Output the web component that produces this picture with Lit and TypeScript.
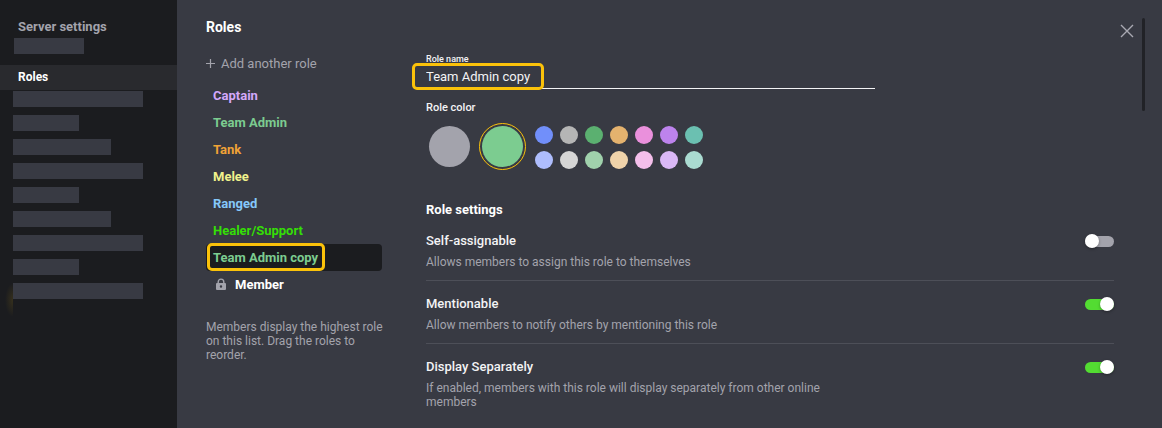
import { LitElement, html, css } from "lit";
import { customElement, property, state } from "lit/decorators.js";

@customElement("toggle-row")
class ToggleRow extends LitElement {
  @property() name = "";
  @property() description = "";
  @property({ type: Boolean }) on = false;

  static styles = css`
    :host { display: block; }
    .row {
      display: grid;
      grid-template-columns: 1fr auto;
      gap: 6px 32px;
      padding: 15px 0 11px;
    }
    :host(:not(:last-of-type)) .row { border-bottom: 1px solid #4d4f58; }
    .name { font-size: 13px; font-weight: 500; line-height: 16px; color: #f3f3f5; }
    .description {
      grid-column: 1;
      max-width: 420px;
      margin: 0;
      font-size: 12px;
      line-height: 14px;
      color: #a3a3ac;
    }
    .switch {
      appearance: none;
      align-self: center;
      display: flex;
      align-items: center;
      width: 29px;
      height: 11px;
      margin: 0;
      border-radius: 6px;
      background: #a3a3ac;
      cursor: pointer;
    }
    .switch::before {
      content: "";
      width: 14px;
      height: 14px;
      flex: none;
      border-radius: 50%;
      background: #fff;
      box-shadow: 0 1px 3px rgba(0, 0, 0, 0.35);
    }
    .switch:checked { justify-content: flex-end; background: #53dc32; }
  `;

  render() {
    return html`
      <div class="row">
        <label class="name" for="switch">${this.name}</label>
        <input class="switch" id="switch" type="checkbox" role="switch"
          aria-describedby="description" .checked=${this.on} />
        <p class="description" id="description">${this.description}</p>
      </div>
    `;
  }
}

const ROLES = [
  { name: "Captain", color: "#d4a8fa" },
  { name: "Team Admin", color: "#7ccc90" },
  { name: "Tank", color: "#f0a236" },
  { name: "Melee", color: "#f0f28c" },
  { name: "Ranged", color: "#85c8fa" },
  { name: "Healer/Support", color: "#35de06" },
  { name: "Team Admin copy", color: "#7ccc90" },
];

const COLORS = [
  "#718ffa", "#b5b5b5", "#5bb070", "#e4b26e", "#ea90dc", "#bd83ed", "#6bc0b1",
  "#aebdfd", "#d6d6d6", "#a0d1ac", "#f0d3aa", "#f4bfeb", "#dab8f6", "#aadbd1",
];

const PLACEHOLDERS = [130, 66, 98, 130, 66, 98, 130, 66, 130];

@customElement("app-root")
class AppRoot extends LitElement {
  @state() selected = 6;

  static styles = css`
    :host {
      display: block;
      font-family: Roboto, sans-serif;
      color: #fff;
    }
    *, *::after { box-sizing: border-box; }
    button, input { font-family: inherit; }
    button { border: 0; background: none; padding: 0; cursor: pointer; text-align: left; }
    h1, h2, p, ul, fieldset { margin: 0; padding: 0; }
    ul { list-style: none; }

    .page { display: flex; min-height: 100vh; background: #383a43; }

    .sidebar { flex: none; width: 177px; padding-top: 17px; background: #1b1c1f; }
    .sidebar-title {
      padding: 0 18px;
      font-size: 13px;
      font-weight: 700;
      line-height: 20px;
      color: #a3a3ac;
    }
    .bar { height: 16px; background: #383a43; }
    .bar.server { width: 70px; margin: 1px 0 11px 14px; }
    .current {
      display: block;
      padding: 0 18px;
      font-size: 12px;
      font-weight: 700;
      line-height: 25px;
      color: #fff;
      background: #292a2e;
      text-decoration: none;
    }
    .bars { display: grid; gap: 8px; margin-top: 1px; padding-left: 13px; position: relative; }
    .glow {
      position: absolute;
      left: 0;
      bottom: -18px;
      width: 13px;
      height: 34px;
      background: radial-gradient(8px 17px at right, rgba(251, 194, 10, 0.12), transparent);
    }

    .main {
      flex: 1;
      display: grid;
      grid-template-columns: 180px minmax(0, 1fr) 48px;
      padding: 17px 0 18px 29px;
    }

    .title { font-size: 14px; font-weight: 700; line-height: 20px; }
    .add {
      display: flex;
      align-items: center;
      gap: 5px;
      margin: 17px 0 8px;
      font-size: 13px;
      line-height: 20px;
      color: #a3a3ac;
    }
    .role {
      display: flex;
      align-items: center;
      gap: 8px;
      width: 176px;
      height: 27px;
      padding-left: 7px;
      border-radius: 4px;
      font-size: 13px;
      font-weight: 700;
    }
    .role.selected { background: #1b1c1f; }
    .marked { position: relative; }
    .marked::after {
      content: "";
      position: absolute;
      border: 3px solid #fbc20a;
      border-radius: 5px;
      pointer-events: none;
    }
    .role .marked::after { inset: -7px -7px -6px -6px; }
    .member { padding-left: 9px; color: #fff; }
    .hint { margin-top: 22px; font-size: 12px; line-height: 14px; color: #a3a3ac; }

    .form { padding: 37px 0 0 40px; }
    .field-label { display: block; font-size: 9px; font-weight: 500; line-height: 10px; color: #f3f3f5; }
    .name-box { width: 449px; max-width: 100%; }
    .name-box::after { inset: -1px auto -1px -14px; width: 132px; }
    .name-input {
      display: block;
      width: 100%;
      height: 25px;
      padding: 0;
      border: 0;
      border-bottom: 1px solid #f3f3f5;
      border-radius: 0;
      outline: 0;
      background: none;
      font-size: 13px;
      color: #f3f3f5;
    }
    .colors { margin-top: 11px; border: 0; min-width: 0; }
    .legend { padding: 0; font-size: 11px; font-weight: 500; line-height: 16px; color: #f3f3f5; }
    .swatches { display: flex; gap: 12px; margin-top: 10px; padding-left: 3px; }
    .swatch {
      appearance: none;
      flex: none;
      width: 18px;
      height: 18px;
      margin: 0;
      border-radius: 50%;
      cursor: pointer;
    }
    .swatch.large { width: 41px; height: 41px; }
    .swatch.large:checked { outline: 1px solid #fbc20a; outline-offset: 2px; }
    .palette { display: grid; grid-template-columns: repeat(7, 18px); gap: 7px; }
    .section { margin-top: 33px; font-size: 13px; font-weight: 700; line-height: 16px; }

    .rail { display: flex; justify-content: space-between; align-items: flex-start; padding: 1px 17px 0 6px; }
    .close { display: flex; margin-top: 6px; }
    .thumb { width: 3px; height: 93px; border-radius: 2px; background: #212227; }
    svg { display: block; flex: none; }
  `;

  render() {
    return html`
      <div class="page">
        <nav class="sidebar" aria-label="Server settings">
          <div class="sidebar-title">Server settings</div>
          <div class="bar server"></div>
          <a class="current" href="#roles" aria-current="page">Roles</a>
          <div class="bars">
            ${PLACEHOLDERS.map((w) => html`<div class="bar" style="width:${w}px"></div>`)}
            <div class="glow"></div>
          </div>
        </nav>

        <main class="main">
          <section>
            <h1 class="title">Roles</h1>
            <button class="add" type="button">
              <svg width="10" height="10" viewBox="0 0 10 10" stroke="#a3a3ac" stroke-width="1.2">
                <path d="M4.5 0v9M0 4.5h9" />
              </svg>
              Add another role
            </button>
            <ul>
              ${ROLES.map((role, i) => html`
                <li>
                  <button type="button" class="role ${i === this.selected ? "selected" : ""}"
                    style="color:${role.color}" @click=${() => (this.selected = i)}>
                    <span class=${i === 6 ? "marked" : ""}>${role.name}</span>
                  </button>
                </li>`)}
              <li>
                <button type="button" class="role member">
                  <svg width="12" height="13" viewBox="0 0 12 13">
                    <path d="M3.2 6V3.9a2.8 2.8 0 0 1 5.6 0V6" fill="none" stroke="#a3a3ac" stroke-width="1.4" />
                    <path fill="#a3a3ac" fill-rule="evenodd"
                      d="M2 5h8a1 1 0 0 1 1 1v5a1 1 0 0 1-1 1H2a1 1 0 0 1-1-1V6a1 1 0 0 1 1-1ZM6 7.3a1.2 1.2 0 1 0 0 2.4a1.2 1.2 0 0 0 0-2.4Z" />
                  </svg>
                  Member
                </button>
              </li>
            </ul>
            <p class="hint">Members display the highest role on this list. Drag the roles to reorder.</p>
          </section>

          <section class="form">
            <label class="field-label" for="role-name">Role name</label>
            <div class="name-box marked">
              <input class="name-input" id="role-name" type="text" value="Team Admin copy" />
            </div>

            <fieldset class="colors">
              <legend class="legend">Role color</legend>
              <div class="swatches">
                <input class="swatch large" type="radio" name="color" aria-label="Default"
                  style="background:#a3a3ac" />
                <input class="swatch large" type="radio" name="color" aria-label="Current"
                  style="background:#7ccc90" checked />
                <div class="palette">
                  ${COLORS.map((c) => html`
                    <input class="swatch" type="radio" name="color" aria-label=${c} style="background:${c}" />`)}
                </div>
              </div>
            </fieldset>

            <h2 class="section">Role settings</h2>
            <toggle-row name="Self-assignable"
              description="Allows members to assign this role to themselves"></toggle-row>
            <toggle-row name="Mentionable" on
              description="Allow members to notify others by mentioning this role"></toggle-row>
            <toggle-row name="Display Separately" on
              description="If enabled, members with this role will display separately from other online members"></toggle-row>
          </section>

          <div class="rail">
            <button class="close" type="button" aria-label="Close">
              <svg width="14" height="14" viewBox="0 0 14 14" stroke="#a9a9b2" stroke-width="1.4">
                <path d="M1 1l12 12M13 1L1 13" />
              </svg>
            </button>
            <div class="thumb"></div>
          </div>
        </main>
      </div>
    `;
  }
}
